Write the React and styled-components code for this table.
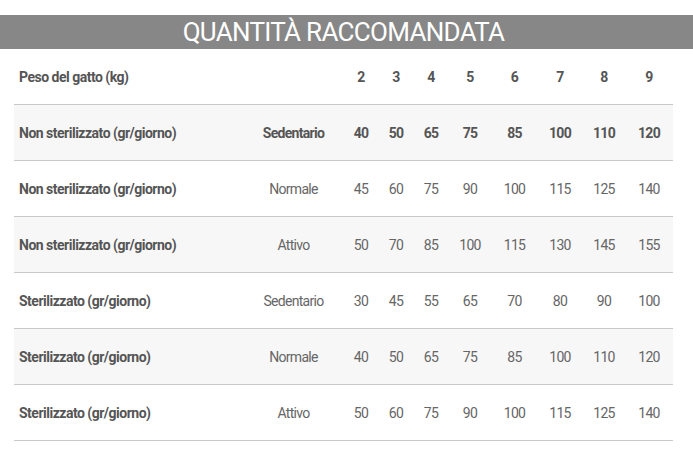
import React from 'react'
import styled, { createGlobalStyle } from 'styled-components'

const GlobalStyle = createGlobalStyle`
  body {
    margin: 0;
    background: #fff;
    font-family: Roboto, 'Liberation Sans', sans-serif;
  }
`

const weights = [2, 3, 4, 5, 6, 7, 8, 9]

const rows = [
  { label: 'Non sterilizzato (gr/giorno)', activity: 'Sedentario', values: [40, 50, 65, 75, 85, 100, 110, 120], strong: true },
  { label: 'Non sterilizzato (gr/giorno)', activity: 'Normale', values: [45, 60, 75, 90, 100, 115, 125, 140] },
  { label: 'Non sterilizzato (gr/giorno)', activity: 'Attivo', values: [50, 70, 85, 100, 115, 130, 145, 155] },
  { label: 'Sterilizzato (gr/giorno)', activity: 'Sedentario', values: [30, 45, 55, 65, 70, 80, 90, 100] },
  { label: 'Sterilizzato (gr/giorno)', activity: 'Normale', values: [40, 50, 65, 75, 85, 100, 110, 120] },
  { label: 'Sterilizzato (gr/giorno)', activity: 'Attivo', values: [50, 60, 75, 90, 100, 115, 125, 140] },
]

const App = () => {
  return (
    <Page>
      <GlobalStyle />
      <TitleBar>
        <h1>QUANTITÀ RACCOMANDATA</h1>
      </TitleBar>

      <Table>
        <HeadRow>
          <Label>Peso del gatto (kg)</Label>
          <Cell />
          {weights.map((w) => (
            <Cell key={w} $bold>
              {w}
            </Cell>
          ))}
        </HeadRow>

        {rows.map((row, i) => (
          <Row key={i} $striped={i % 2 === 0}>
            <Label>{row.label}</Label>
            <Cell $bold={row.strong}>{row.activity}</Cell>
            {row.values.map((v, j) => (
              <Cell key={j} $bold={row.strong}>
                {v}
              </Cell>
            ))}
          </Row>
        ))}
      </Table>
    </Page>
  )
}

const Page = styled.div`
  padding-top: 15px;
  width: 693px;
`

const TitleBar = styled.div`
  height: 34px;
  background: #878787;
  display: flex;
  align-items: center;
  justify-content: center;

  h1 {
    margin: 0;
    color: #fff;
    font-size: 26px;
    font-weight: 400;
    letter-spacing: -0.7px;
    line-height: 34px;
    transform: translateX(-3px);
  }
`

const Table = styled.div`
  margin: 0 20px 0 14px;
`

const columns = '230px 99px 36px 34px 36px 42px 47px 44px 44px 46px'

const HeadRow = styled.div`
  display: grid;
  grid-template-columns: ${columns};
  align-items: center;
  height: 55px;
  border-bottom: 1.5px solid #c9c9c9;
`

const Row = styled(HeadRow)`
  background: ${(p) => (p.$striped ? '#f7f7f7' : '#fff')};
`

const Label = styled.div`
  padding-left: 5px;
  font-size: 14px;
  font-weight: 700;
  letter-spacing: -0.5px;
  color: #555;
  white-space: nowrap;
`

const Cell = styled.div`
  text-align: center;
  font-size: 14px;
  font-weight: ${(p) => (p.$bold ? 700 : 400)};
  letter-spacing: -0.7px;
  color: ${(p) => (p.$bold ? '#555' : '#666')};
  white-space: nowrap;
`

export default App
